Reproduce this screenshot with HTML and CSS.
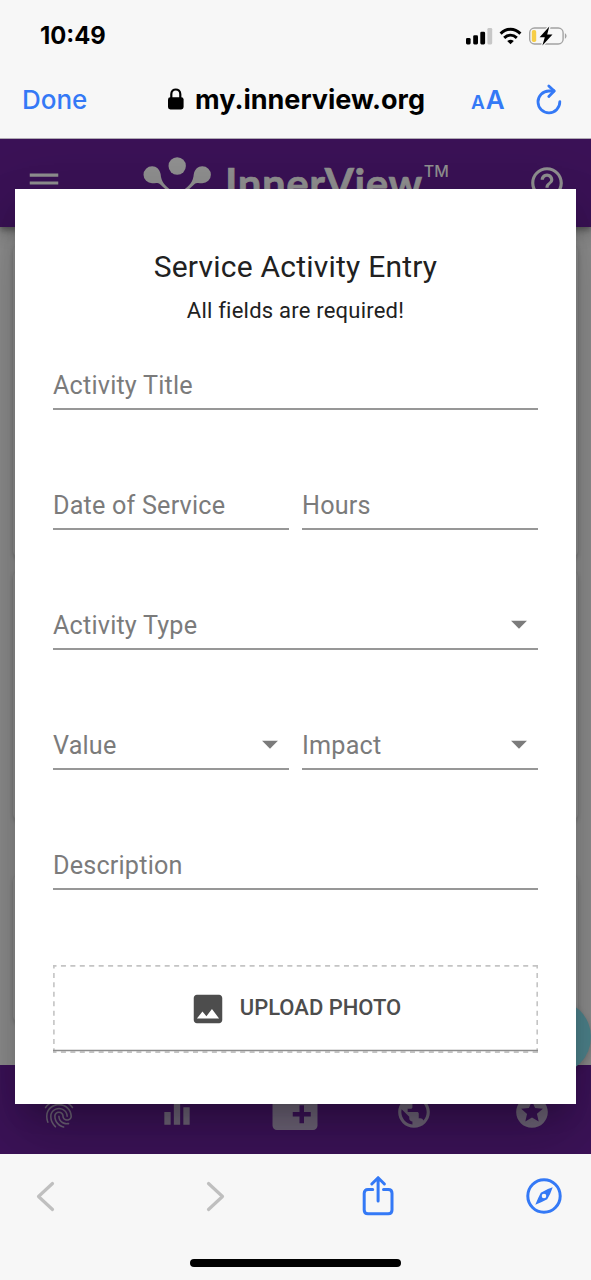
FILE: index.html
```html
<!DOCTYPE html>
<html lang="en">
<head>
<meta charset="utf-8">
<title>Service Activity Entry</title>
<link rel="stylesheet" href="styles.css">
</head>
<body>
<div class="phone">
  <header class="chrome">
    <div class="status">
      <span class="time">10:49</span>
      <svg class="status-icons" width="104" height="20" viewBox="0 0 104 20">
        <rect x="2" y="11" width="4.6" height="6.4" rx="1.3"/>
        <rect x="9.2" y="8.2" width="4.8" height="9.2" rx="1.3"/>
        <rect x="16.3" y="4.8" width="4.8" height="12.6" rx="1.3"/>
        <rect x="23.4" y="1" width="4.8" height="16.4" rx="1.3" fill="#c7c7c7"/>
        <g fill="none" stroke="#000" stroke-width="3">
          <path d="M36.6 6.6C42.5 .9 50.5 .9 56.4 6.6"/>
          <path d="M40.2 10.8C44 7.3 49 7.3 52.8 10.8"/>
        </g>
        <path d="M43.2 14C45.4 12.300 47.6 12.300 49.8 14L46.5 17.3Z"/>
        <rect x="65.7" y="1" width="33.4" height="16" rx="4.8" fill="none" stroke="#a3a3a3" stroke-width="1.4"/>
        <path d="M100.9 6.3C103.1 7.3 103.1 10.7 100.9 11.7Z" fill="#a3a3a3"/>
        <rect x="67.8" y="3" width="4.4" height="12" rx="1.8" fill="#f7ce46"/>
        <path d="M85.3 -.4L75.6 10.3H80.8L78.4 18.4L88.5 7.6H83.2Z" stroke="#f7f7f7" stroke-width="2.6" paint-order="stroke"/>
      </svg>
    </div>
    <div class="address">
      <span class="done">Done</span>
      <span class="host">
        <svg width="18" height="24" viewBox="0 0 18 24"><rect x="1" y="9.2" width="15.6" height="12.2" rx="2.4"/><path d="M4.3 10V6.2C4.3-.1 13.3-.1 13.3 6.2V10" fill="none" stroke="#000" stroke-width="2.2"/></svg>
        <b>my.innerview.org</b>
      </span>
      <span class="text-size"><small>A</small>A</span>
      <svg class="reload" width="28" height="32" viewBox="0 0 28 32" fill="none" stroke="#3479f6" stroke-width="2.8" stroke-linecap="round" stroke-linejoin="round"><path d="M24.8 17.6A10.9 10.9 0 1 1 13.9 7H19"/><path d="M13.8 2L19.2 7.1L13.8 12.6"/></svg>
    </div>
  </header>

  <main class="page">
    <div class="app-bar">
      <svg class="icon menu" viewBox="0 0 24 24"><path d="M3 18h18v-2H3v2zm0-5h18v-2H3v2zm0-7v2h18V6H3z"/></svg>
      <div class="brand">
        <svg width="70" height="48" viewBox="0 0 70 48">
          <circle cx="34.2" cy="9" r="8.7"/>
          <path d="M17.600 17C16.500 12 13.500 9.200 9.200 9.200A8.600 8.600 0 0 0 .5 17.800A8.600 8.600 0 0 0 9.200 26.300C12 26.300 14.500 25.200 17 27.200L26 35.500L28.500 33.500C22 28.500 18.200 25 17.600 17Z"/>
          <path d="M50.800 17C51.900 12 54.900 9.200 59.200 9.200A8.600 8.600 0 0 1 67.900 17.800A8.600 8.600 0 0 1 59.200 26.300C56.400 26.300 53.900 25.200 51.400 27.200L42.400 35.500L39.900 33.500C46.400 28.500 50.200 25 50.800 17Z"/>
        </svg>
        <span class="brand-name">InnerView</span><span class="tm">TM</span>
      </div>
      <svg class="icon help" viewBox="0 0 24 24"><path d="M11 18h2v-2h-2v2zm1-16C6.480 2 2 6.480 2 12s4.480 10 10 10 10-4.480 10-10S17.520 2 12 2zm0 18c-4.410 0-8-3.590-8-8s3.590-8 8-8 8 3.590 8 8-3.590 8-8 8zm0-14c-2.210 0-4 1.790-4 4h2c0-1.100.9-2 2-2s2 .9 2 2c0 2-3 1.750-3 5h2c0-2.250 3-2.500 3-5 0-2.210-1.790-4-4-4z"/></svg>
    </div>
    <div class="feed">
      <div class="card card-first"></div>
      <div class="card card-second"></div>
      <div class="card card-third"></div>
    </div>
    <nav class="tabs">
      <svg class="icon" viewBox="0 0 24 24"><path d="M17.810 4.470c-.08 0-.16-.02-.23-.06C15.660 3.420 14 3 12.010 3c-1.980 0-3.860.47-5.570 1.410-.24.13-.54.04-.68-.2-.13-.24-.04-.55.2-.68C7.820 2.520 9.860 2 12.010 2c2.130 0 3.990.47 6.030 1.520.25.13.34.43.21.67-.09.18-.26.28-.44.28zM3.500 9.720c-.1 0-.2-.03-.29-.09-.23-.16-.28-.47-.12-.7.99-1.400 2.250-2.500 3.750-3.270C9.980 4.040 14 4.030 17.150 5.650c1.500.77 2.760 1.860 3.750 3.250.16.22.11.54-.12.7-.23.16-.54.11-.7-.12-.9-1.260-2.040-2.250-3.390-2.940-2.870-1.470-6.540-1.470-9.400.01-1.360.7-2.500 1.700-3.400 2.960-.08.14-.23.21-.39.21zm6.250 12.070c-.13 0-.26-.05-.35-.15-.87-.87-1.340-1.430-2.010-2.640-.69-1.230-1.050-2.730-1.050-4.340 0-2.970 2.540-5.390 5.660-5.390s5.660 2.420 5.660 5.390c0 .28-.22.5-.5.5s-.5-.22-.5-.5c0-2.420-2.090-4.390-4.660-4.390-2.570 0-4.660 1.970-4.660 4.390 0 1.440.32 2.770.93 3.850.64 1.150 1.080 1.640 1.850 2.420.19.2.19.51 0 .71-.11.1-.24.15-.37.15zm7.170-1.850c-1.190 0-2.240-.3-3.100-.89-1.490-1.010-2.380-2.650-2.380-4.390 0-.28.22-.5.5-.5s.5.22.5.5c0 1.410.72 2.740 1.940 3.560.71.48 1.540.71 2.540.71.24 0 .64-.03 1.040-.1.27-.05.53.13.58.41.05.27-.13.53-.41.58-.57.11-1.070.12-1.210.12zM14.910 22c-.04 0-.09-.01-.13-.02-1.590-.44-2.630-1.030-3.720-2.100-1.400-1.390-2.170-3.240-2.170-5.220 0-1.620 1.380-2.940 3.080-2.940 1.700 0 3.080 1.320 3.080 2.940 0 1.070.93 1.940 2.080 1.940s2.080-.87 2.080-1.940c0-3.770-3.250-6.830-7.250-6.830-2.840 0-5.440 1.580-6.610 4.030-.39.81-.59 1.760-.59 2.800 0 .78.07 2.010.67 3.610.1.26-.03.55-.29.64-.26.1-.55-.04-.64-.29-.49-1.310-.73-2.610-.73-3.960 0-1.200.23-2.290.68-3.240 1.330-2.790 4.280-4.600 7.510-4.600 4.550 0 8.250 3.510 8.250 7.830 0 1.620-1.380 2.940-3.080 2.940s-3.080-1.320-3.080-2.940c0-1.070-.93-1.940-2.080-1.940s-2.080.87-2.080 1.940c0 1.710.66 3.310 1.870 4.510.95.94 1.860 1.460 3.270 1.850.27.07.42.35.35.61-.05.23-.26.38-.47.38z"/></svg>
      <svg class="icon" viewBox="0 0 24 24"><path d="M10 20h4V4h-4v16zm-6 0h4v-8H4v8zM16 9v11h4V9h-4z"/></svg>
      <svg class="icon folder" viewBox="0 0 24 24"><path d="M20 6h-8l-2-2H4c-1.110 0-1.990.89-1.990 2L2 18c0 1.110.89 2 2 2h16c1.110 0 2-.89 2-2V8c0-1.110-.89-2-2-2zm-1 8h-3v3h-2v-3h-3v-2h3V9h2v3h3v2z"/></svg>
      <svg class="icon" viewBox="0 0 24 24"><path d="M12 2C6.480 2 2 6.480 2 12s4.480 10 10 10 10-4.480 10-10S17.520 2 12 2zm-1 17.930c-3.950-.49-7-3.850-7-7.930 0-.62.08-1.210.21-1.790L9 15v1c0 1.100.9 2 2 2v1.930zm6.900-2.540c-.26-.81-1-1.390-1.900-1.390h-1v-3c0-.55-.45-1-1-1H8v-2h2c.55 0 1-.45 1-1V7h2c1.100 0 2-.9 2-2v-.41c2.930 1.190 5 4.060 5 7.410 0 2.080-.8 3.970-2.100 5.390z"/></svg>
      <svg class="icon" viewBox="0 0 24 24"><path d="M11.990 2C6.470 2 2 6.480 2 12s4.470 10 9.990 10C17.520 22 22 17.520 22 12S17.520 2 11.990 2zm4.240 16L12 15.450 7.770 18l1.120-4.810-3.730-3.230 4.920-.42L12 5l1.920 4.530 4.920.42-3.730 3.230L16.230 18z"/></svg>
    </nav>
    <div class="fab"></div>

    <section class="dialog">
      <h1>Service Activity Entry</h1>
      <p class="note">All fields are required!</p>
      <form class="fields">
        <div class="field wide">Activity Title</div>
        <div class="field">Date of Service</div>
        <div class="field">Hours</div>
        <div class="field wide">Activity Type<svg class="icon" viewBox="0 0 24 24"><path d="M7 10l5 5 5-5z"/></svg></div>
        <div class="field">Value<svg class="icon" viewBox="0 0 24 24"><path d="M7 10l5 5 5-5z"/></svg></div>
        <div class="field">Impact<svg class="icon" viewBox="0 0 24 24"><path d="M7 10l5 5 5-5z"/></svg></div>
        <div class="field wide">Description</div>
      </form>
      <div class="upload">
        <svg class="outline" width="485" height="88" viewBox="0 0 485 88" fill="none" stroke="#c4c4c4" stroke-width="1.600">
          <path d="M0 .9H485M0 87.100H485" stroke-dasharray="5 4.434" stroke-dashoffset="1.500"/>
          <path d="M.9 0V88M484.200 0V88" stroke-dasharray="5 4.430" stroke-dashoffset="1.500"/>
          <path d="M0 85.500H485" stroke="#8d8d8d"/>
        </svg>
        <svg class="icon" viewBox="0 0 24 24"><path d="M21 19V5c0-1.100-.9-2-2-2H5c-1.100 0-2 .9-2 2v14c0 1.100.9 2 2 2h14c1.100 0 2-.9 2-2zM8.500 13.500l2.500 3.010L14.500 12l4.500 6H5l3.500-4.500z"/></svg>
        <span>UPLOAD PHOTO</span>
      </div>
    </section>
  </main>

  <footer class="toolbar">
    <div class="actions">
      <svg width="20" height="34" viewBox="0 0 20 34" class="chevron"><path d="M16.500 4.500L2.500 17.500L16.500 30.500"/></svg>
      <svg width="20" height="34" viewBox="0 0 20 34" class="chevron forward"><path d="M3.500 4.500L17.500 17.500L3.500 30.500"/></svg>
      <svg width="34" height="42" viewBox="0 0 34 42" class="action share"><path d="M11.700 14.500H7Q3.200 14.500 3.200 18.300V35Q3.200 38.800 7 38.800H27.200Q31 38.800 31 35V18.300Q31 14.500 27.200 14.500H22.500M17.100 26V3M10.800 9L17.100 2.700L23.400 9"/></svg>
      <svg width="36" height="36" viewBox="0 0 36 36" class="action browser"><circle cx="18" cy="18" r="16.200"/><path class="needle" d="M26.700 9.300Q21 10.800 14.800 14.800Q12.300 19.500 9.300 26.700Q15 24.600 21.200 21.200Q24.600 16 26.700 9.300ZM18 15.700A2.300 2.300 0 1 1 18 20.300A2.300 2.300 0 1 1 18 15.700Z"/></svg>
    </div>
    <div class="home"></div>
  </footer>
</div>
</body>
</html>
```

FILE: styles.css
```css
* { box-sizing: border-box; }
body { margin: 0; background: #f7f7f7; font-family: Roboto, sans-serif; }
svg { display: block; flex: none; }
.phone { width: 591px; height: 1280px; display: flex; flex-direction: column; overflow: hidden; }

.chrome { height: 139px; background: #f7f7f7; border-bottom: 1px solid #b0aab4; font-family: Inter, sans-serif; }
.status { height: 70px; padding: 0 23px 0 40px; display: flex; align-items: center; justify-content: space-between; }
.time { font-size: 23.8px; font-weight: 700; line-height: 28px; padding-top: 1px; }
.status-icons { margin-top: 3px; overflow: visible; }
.address { height: 60px; padding: 0 28px 0 22px; display: flex; align-items: center; }
.done { width: 145px; font-size: 26px; line-height: 30px; font-weight: 500; color: #3479f6; }
.host { display: flex; align-items: center; gap: 10px; width: 304px; font-size: 27px; line-height: 30px; white-space: nowrap; }
.host b { margin-top: -1px; }
.text-size { width: 64px; color: #3479f6; font-size: 26px; line-height: 30px; padding-top: 2px; font-weight: 600; white-space: nowrap; }
.text-size small { font-size: 19px; margin-right: 1px; }

.page { position: relative; height: 1015px; display: flex; flex-direction: column; background: #929292; overflow: hidden; }
.icon { width: 38px; height: 38px; fill: currentColor; }
.app-bar { position: relative; height: 88px; flex: none; padding: 0 25px; display: flex; align-items: center; color: #929292; background: #3b1257; box-shadow: 0 3px 6px #0005, 0 6px 16px #0003; }
.app-bar .help { margin-left: auto; }
.brand { display: flex; height: 60px; align-items: flex-start; padding: 4px 0 0; margin-left: 80px; fill: #929292; }
.brand-name { font: 700 42px/50px Lato, sans-serif; letter-spacing: .6px; margin: 1px 0 0 12px; -webkit-text-stroke: .7px #929292; }
.tm { font: 500 16px/20px Inter, sans-serif; padding-top: 4px; margin-left: 1px; }
.feed { flex: 1; padding: 18px 13px 0; }
.card { border-radius: 6px; background: #929292; box-shadow: 0 2px 5px #0003; }
.card-first { height: 312px; }
.card-second { height: 249px; margin-top: 14px; }
.card-third { height: 147px; margin-top: 55px; }
.tabs { height: 89px; flex: none; display: grid; grid-template-columns: repeat(5, 1fr); place-items: center; padding-top: 4px; background: #3d135a; color: #71677b; }
.tabs .folder { width: 54px; height: 54px; }
.fab { position: absolute; left: 517px; top: 861px; width: 74px; height: 74px; border-radius: 50%; background: #508790; box-shadow: 0 3px 7px #0003; }

.dialog { position: absolute; left: 15px; top: 50px; width: 561px; height: 915px; padding: 58px 38px 0; background: #fff; color: #212121; box-shadow: 0 17px 24px -11px #0003, 0 38px 60px 5px #00000024, 0 14px 72px 12px #0000001f; }
h1 { margin: 0; font-weight: 400; font-size: 30px; line-height: 40px; text-align: center; letter-spacing: .22px; }
.note { margin: 8px 0 0; font-size: 22px; line-height: 32px; text-align: center; letter-spacing: .22px; }
.fields { display: grid; grid-template-columns: 1fr 1fr; gap: 70px 13px; margin-top: 33px; }
.field { height: 50px; display: flex; align-items: center; justify-content: space-between; padding-top: 2px; border-bottom: 2px solid #979797; color: #7b7b7b; font-size: 25.200px; letter-spacing: .19px; }
.field .icon { margin-top: -2px; }
.wide { grid-column: 1 / -1; }
.upload { position: relative; height: 88px; margin-top: 75px; padding: 0 1px 1px 0; display: flex; align-items: center; justify-content: center; gap: 13px; color: #4d4d4d; font-size: 22px; font-weight: 500; letter-spacing: 0; }
.upload span { padding-bottom: 2px; }
.outline { position: absolute; inset: 0; }

.toolbar { height: 126px; background: #f7f7f7; }
.actions { height: 84px; padding: 0 29px 0 36px; display: flex; align-items: center; }
.forward { margin-left: 149px; }
.share { margin-left: 136px; }
.browser { margin-left: auto; }
.chevron { fill: none; stroke: #bfbfbf; stroke-width: 3.200; stroke-linecap: round; stroke-linejoin: round; }
.action { fill: none; stroke: #3479f6; stroke-width: 3; stroke-linecap: round; stroke-linejoin: round; }
.needle { fill: #3479f6; fill-rule: evenodd; stroke: none; }
.home { width: 211px; height: 8px; margin: 21px auto 0; border-radius: 4px; background: #000; }
```
